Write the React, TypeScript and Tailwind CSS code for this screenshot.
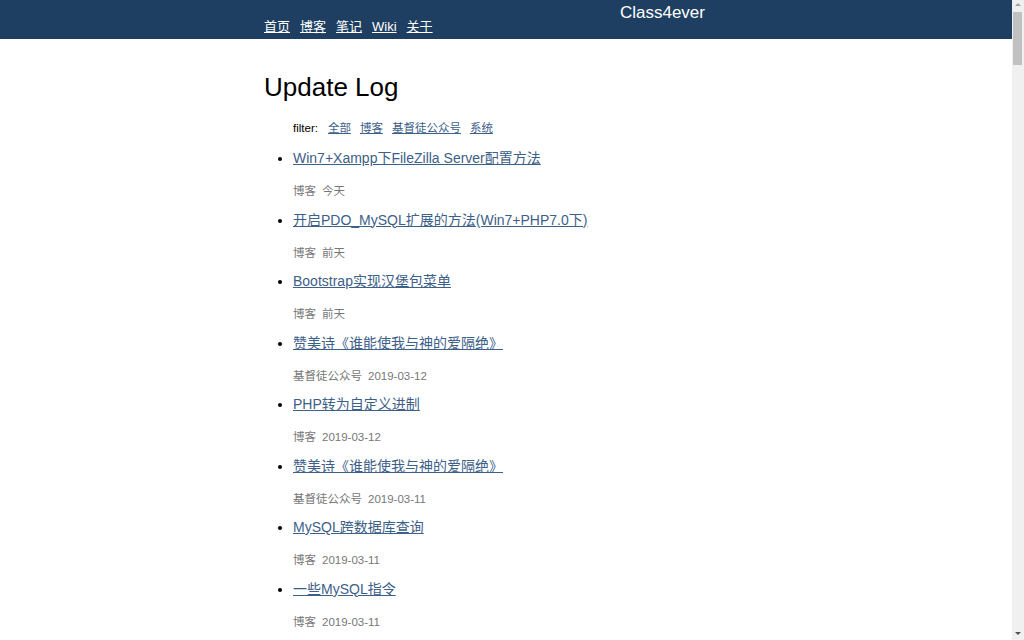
const posts = [
  { title: "Win7+Xampp下FileZilla Server配置方法", cat: "博客", date: "今天" },
  { title: "开启PDO_MySQL扩展的方法(Win7+PHP7.0下)", cat: "博客", date: "前天" },
  { title: "Bootstrap实现汉堡包菜单", cat: "博客", date: "前天" },
  { title: "赞美诗《谁能使我与神的爱隔绝》", cat: "基督徒公众号", date: "2019-03-12" },
  { title: "PHP转为自定义进制", cat: "博客", date: "2019-03-12" },
  { title: "赞美诗《谁能使我与神的爱隔绝》", cat: "基督徒公众号", date: "2019-03-11" },
  { title: "MySQL跨数据库查询", cat: "博客", date: "2019-03-11" },
  { title: "一些MySQL指令", cat: "博客", date: "2019-03-11" },
];

const navLinks = ["首页", "博客", "笔记", "Wiki", "关于"];
const filters = ["全部", "博客", "基督徒公众号", "系统"];

const font = "font-['Liberation_Sans','Noto_Sans_CJK_SC',sans-serif]";

export default function App() {
  return (
    <div className={`flex h-[640px] overflow-hidden bg-white ${font}`}>
      <div className="flex-1 min-w-0">
        {/* top bar */}
        <header className="h-[39px] bg-[#1f3f62]">
          <div className="mx-auto flex h-full w-[484px]">
            <nav className="flex items-start gap-[10px] pt-[18px] text-[13px] leading-[18px] text-white">
              {navLinks.map((n) => (
                <a key={n} href="#" className="underline">
                  {n}
                </a>
              ))}
            </nav>
            <div className="ml-auto mr-[43px] pt-[2px] text-[17px] leading-[22px] text-white">Class4ever</div>
          </div>
        </header>

        <main className="mx-auto w-[484px]">
          <h1 className="mt-[32px] text-[26px] leading-[32px] text-black">Update Log</h1>

          <div className="mt-[15px] flex gap-[9px] pl-[29px] text-[11.5px] leading-[20px]">
            <span className="mr-[1px] text-black">filter:</span>
            {filters.map((f) => (
              <a key={f} href="#" className="text-[#3d6088] underline">
                {f}
              </a>
            ))}
          </div>

          <ul className="mt-[10px] list-disc pl-[29px]">
            {posts.map((p, i) => (
              <li key={i} className="mb-[8.5px] text-[14px] leading-[20px] marker:text-black">
                <a href="#" className="text-[#3d6088] underline">
                  {p.title}
                </a>
                <p className="mt-[13px] flex gap-[6px] text-[11.5px] leading-[20px] text-[#777]">
                  <span>{p.cat}</span>
                  <span>{p.date}</span>
                </p>
              </li>
            ))}
          </ul>
        </main>
      </div>

      {/* scrollbar */}
      <div className="relative w-[12px] shrink-0 bg-[#f0f0f0]">
        <div className="absolute left-[3px] top-[3px] h-0 w-0 border-x-[3px] border-b-[3px] border-x-transparent border-b-[#a3a3a3]" />
        <div className="absolute left-[1px] top-[12px] h-[53px] w-[9px] bg-[#c1c1c1]" />
        <div className="absolute bottom-[5px] left-[3px] h-0 w-0 border-x-[3px] border-t-[3px] border-x-transparent border-t-[#505050]" />
      </div>
    </div>
  );
}
